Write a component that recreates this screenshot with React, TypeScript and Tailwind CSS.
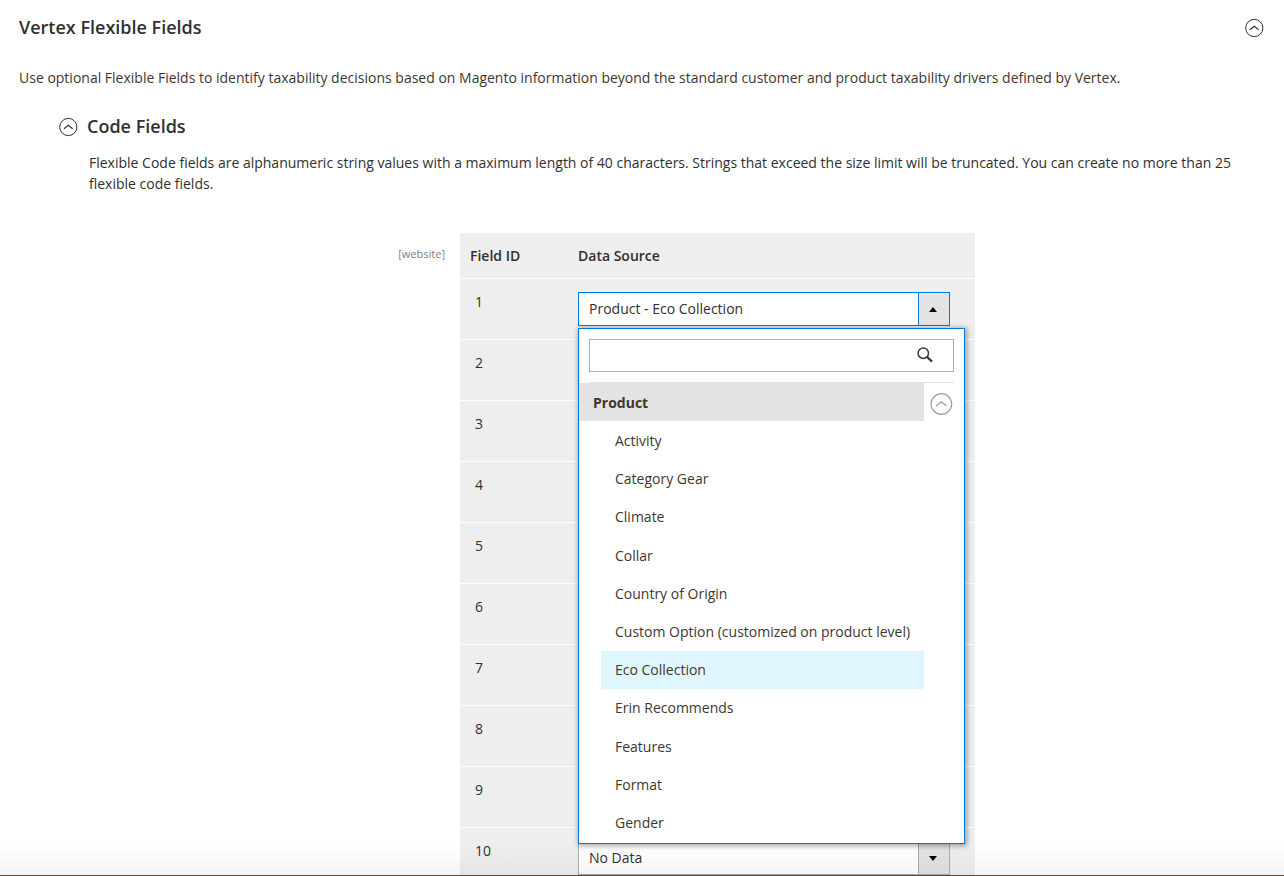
import React, { useState } from "react";

const fieldIds = ["1", "2", "3", "4", "5", "6", "7", "8", "9", "10"];

const productAttributes = [
  "Activity",
  "Category Gear",
  "Climate",
  "Collar",
  "Country of Origin",
  "Custom Option (customized on product level)",
  "Eco Collection",
  "Erin Recommends",
  "Features",
  "Format",
  "Gender",
];

function CollapseIcon({ className }: { className: string }) {
  return (
    <svg viewBox="0 0 20 20" fill="none" stroke="currentColor" className={className} aria-hidden="true">
      <circle cx="10.3" cy="10" r="8.6" strokeWidth="1" />
      <path d="M6 11.7 L10.3 8.2 L14.6 11.7" strokeWidth="1.1" />
    </svg>
  );
}

function SearchIcon() {
  return (
    <svg viewBox="0 0 16 16" fill="none" stroke="currentColor" className="size-4" aria-hidden="true">
      <circle cx="6.3" cy="6.2" r="5.2" strokeWidth="1.5" />
      <path d="M10 9.9 L15 14.6" strokeWidth="2.2" />
    </svg>
  );
}

function Caret({ up = false }: { up?: boolean }) {
  return (
    <svg viewBox="0 0 8 5" className="h-[5px] w-2" fill="#000" aria-hidden="true">
      {up ? <path d="M4 0 L8 5 H0 Z" /> : <path d="M4 5 L8 0 H0 Z" />}
    </svg>
  );
}

function SourcePicker({ selected, onSelect }: { selected: string; onSelect: (v: string) => void }) {
  return (
    <div className="relative">
      <button
        type="button"
        aria-haspopup="listbox"
        aria-expanded="true"
        className="flex h-[34px] w-full border border-[#007bdb] bg-white text-left"
      >
        <span className="flex-1 px-[10px] leading-8">Product - {selected}</span>
        <span className="flex w-[31px] items-center justify-center self-stretch border-l border-[#007bdb] bg-[#e3e3e3] pr-[2px] pt-[2px]">
          <Caret up />
        </span>
      </button>
      <div className="absolute left-0 top-9 z-10 w-[387px] border border-[#007bdb] bg-white text-[#41362f] shadow-[1px_1px_5px_1px_rgba(0,0,0,0.35)]">
        <div className="px-[10px] pt-[10px]">
          <div className="relative border-b border-[#e3e3e3] pb-[10px]">
            <input
              type="text"
              aria-label="Search"
              className="block h-[33px] w-full border border-[#adadad] bg-white pl-[10px] pr-10 outline-none"
            />
            <span className="absolute right-[21px] top-2">
              <SearchIcon />
            </span>
          </div>
        </div>
        <div className="flex h-[38px]">
          <div className="flex-1 bg-[#e3e3e3] pl-[14px] font-bold leading-[40px]">Product</div>
          <button type="button" aria-label="Collapse group" className="flex w-10 items-center pl-[5px] pt-[4px] text-[#a79d95]">
            <CollapseIcon className="size-6" />
          </button>
        </div>
        <ul role="listbox" className="my-[1px] ml-[22px] mr-10 grid h-[420px] auto-rows-[38px] content-between">
          {productAttributes.map((name) => (
            <li key={name} role="option" aria-selected={name === selected}>
              <button
                type="button"
                onClick={() => onSelect(name)}
                className={
                  name === selected
                    ? "block h-[38px] w-full whitespace-nowrap bg-[#e0f6fe] pl-[14px] text-left"
                    : "block h-[38px] w-full whitespace-nowrap pl-[14px] text-left"
                }
              >
                {name}
              </button>
            </li>
          ))}
        </ul>
      </div>
    </div>
  );
}

function SourceSelect({ id }: { id: string }) {
  return (
    <div className="relative">
      <select
        aria-label={"Data Source " + id}
        className="block h-[34px] w-full appearance-none border border-[#adadad] bg-white px-[10px] outline-none"
      >
        <option>No Data</option>
      </select>
      <span className="pointer-events-none absolute inset-y-0 right-0 flex w-8 items-center justify-center border border-[#adadad] bg-[#e3e3e3] pr-[2px] pt-[2px]">
        <Caret />
      </span>
    </div>
  );
}

export default function App() {
  const [selected, setSelected] = useState("Eco Collection");

  return (
    <main className="relative h-screen overflow-hidden bg-white font-['Open_Sans',sans-serif] text-[14px] leading-[21px] text-[#303030]">
      <header className="flex items-center justify-between pl-[19px] pr-5 pt-[15px]">
        <h1 className="text-lg font-semibold leading-6">Vertex Flexible Fields</h1>
        <button type="button" aria-label="Collapse section" className="pt-[2px]">
          <CollapseIcon className="size-5" />
        </button>
      </header>
      <p className="px-[19px] pt-7 text-[#41362f]">
        Use optional Flexible Fields to identify taxability decisions based on Magento information beyond the standard
        customer and product taxability drivers defined by Vertex.
      </p>

      <section>
        <div className="flex items-center gap-[9px] pl-[58px] pt-[26px]">
          <button type="button" aria-label="Collapse code fields" className="pt-[2px]">
            <CollapseIcon className="size-5" />
          </button>
          <h2 className="text-lg font-semibold leading-6">Code Fields</h2>
        </div>
        <p className="pl-[89px] pr-10 pt-[14px]">
          Flexible Code fields are alphanumeric string values with a maximum length of 40 characters. Strings that
          exceed the size limit will be truncated. You can create no more than 25 flexible code fields.
        </p>

        <div className="grid grid-cols-[460px_minmax(0,515px)] pt-[39px]">
          <div className="pr-[15px] pt-[10px] text-right text-[11px] text-[#808080]">[website]</div>
          <table className="w-full table-fixed border-collapse bg-[#eeeeee] text-left">
            <thead>
              <tr className="h-[45px] border-b border-white">
                <th className="w-[108px] pl-[10px] pt-px font-semibold">Field ID</th>
                <th className="pl-[10px] pt-px font-semibold">Data Source</th>
              </tr>
            </thead>
            <tbody>
              {fieldIds.map((id) => (
                <tr key={id} className="h-[61px] border-b border-white align-top">
                  <td className="pl-[15px] pt-[12px]">{id}</td>
                  <td className="pl-[10px] pr-[25px] pt-[13px]">
                    {id === "1" ? <SourcePicker selected={selected} onSelect={setSelected} /> : <SourceSelect id={id} />}
                  </td>
                </tr>
              ))}
            </tbody>
          </table>
        </div>
      </section>

      <div className="pointer-events-none absolute inset-x-0 bottom-0 h-8 border-b border-[#5c4636] bg-linear-to-b from-transparent to-black/4" />
    </main>
  );
}
